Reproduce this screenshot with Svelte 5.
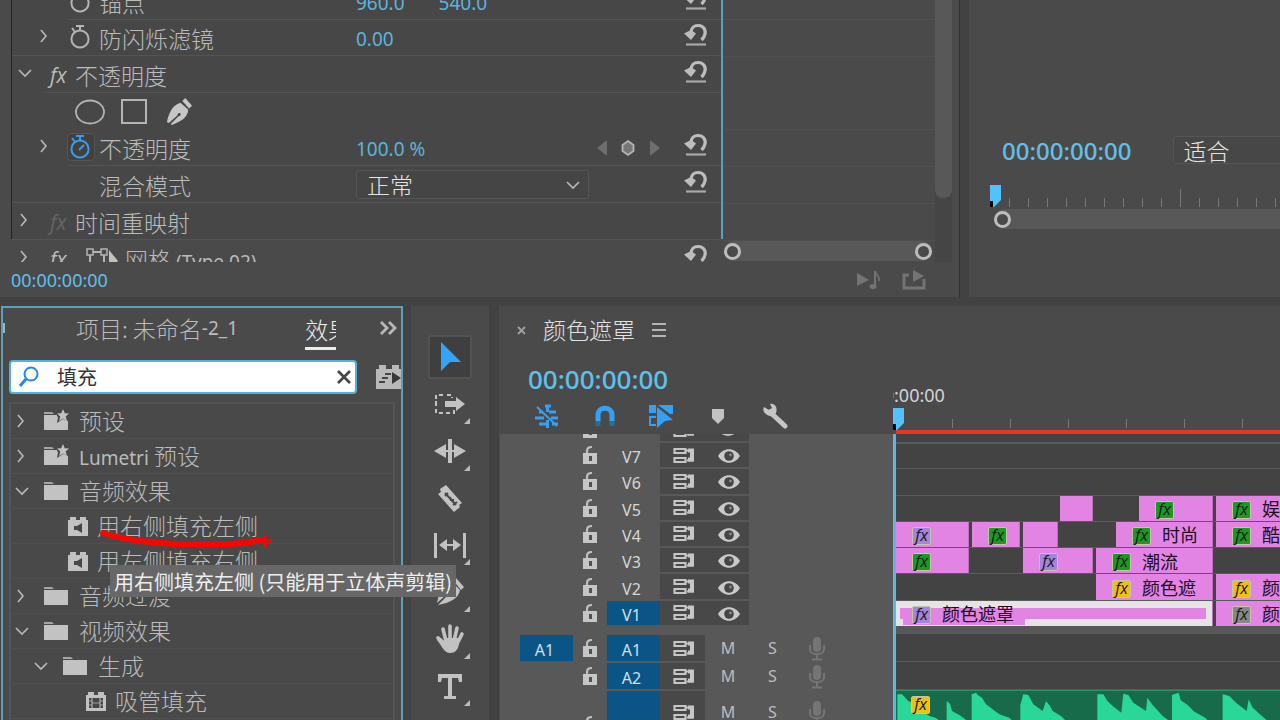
<script>
  let query = $state('填充');
  let tool = $state('select');

  const tree = [
    { label: '预设', icon: 'preset', depth: 0, open: false },
    { latin: 'Lumetri', label: ' 预设', icon: 'preset', depth: 0, open: false },
    { label: '音频效果', icon: 'folder', depth: 0, open: true },
    { label: '用右侧填充左侧', icon: 'audio', depth: 1 },
    { label: '用左侧填充右侧', icon: 'audio', depth: 1 },
    { label: '音频过渡', icon: 'folder', depth: 0, open: false },
    { label: '视频效果', icon: 'folder', depth: 0, open: true },
    { label: '生成', icon: 'folder', depth: 1, open: true },
    { label: '吸管填充', icon: 'video', depth: 2 }
  ];

  const tools = ['select', 'track', 'ripple', 'razor', 'slip', 'pen', 'hand', 'type'];

  const lanes = [
    { name: 'V7', clips: [] },
    { name: 'V6', clips: [] },
    { name: 'V5', clips: [
      { x: 164, w: 33 },
      { x: 243, w: 74, fx: 'green' },
      { x: 320, w: 200, fx: 'green', label: '娱' }
    ] },
    { name: 'V4', clips: [
      { x: 0, w: 73, fx: 'violet' },
      { x: 76, w: 48, fx: 'green' },
      { x: 127, w: 35 },
      { x: 220, w: 97, fx: 'green', label: '时尚' },
      { x: 320, w: 200, fx: 'green', label: '酷' }
    ] },
    { name: 'V3', clips: [
      { x: 0, w: 73, fx: 'green' },
      { x: 127, w: 70, fx: 'violet' },
      { x: 200, w: 117, fx: 'green', label: '潮流' }
    ] },
    { name: 'V2', clips: [
      { x: 200, w: 117, fx: 'yellow', label: '颜色遮' },
      { x: 320, w: 200, fx: 'yellow', label: '颜' }
    ] },
    { name: 'V1', on: true, clips: [
      { x: 0, w: 317, fx: 'violet', label: '颜色遮罩', selected: true },
      { x: 320, w: 200, fx: 'gray', label: '颜' }
    ] }
  ];
  const audio = [{ name: 'A1', source: true }, { name: 'A2' }, { name: '' }];
  const ticks = Array.from({ length: 60 }, (_, i) => i);
</script>

{#snippet chevron(open)}
  <svg class="chev" width="16" height="16" viewBox="0 0 16 16" fill="none" stroke="#b9b9b9" stroke-width="1.6">
    {#if open}<path d="M2 5l6 6 6-6" />{:else}<path d="M4 2l5 6-5 6" />{/if}
  </svg>
{/snippet}

{#snippet stopwatch(on)}
  <svg width="22" height="26" viewBox="0 0 22 26" fill="none" stroke={on ? '#3f9bea' : '#b4b4b4'} stroke-width="2">
    <circle cx="10" cy="15" r="8.6" />
    <path d="M6 2h8M10 2v4M2 4l3 4" />
    {#if on}<path d="M9 16l5-5" />{/if}
  </svg>
{/snippet}

{#snippet reset()}
  <button class="reset" aria-label="重置">
    <svg width="24" height="24" viewBox="0 0 24 24">
      <path d="M7 10C7 5 10 2.500 14 2.500c6 0 8.500 5 6.500 10-.6 2-1.500 3-3 4.500" fill="none" stroke="#bdbdbd" stroke-width="3.200" />
      <path d="M0 10.500L7 7l5 3.500-5 6.500z" fill="#bdbdbd" />
      <path d="M2 21.500h20" stroke="#a8a8a8" stroke-width="2.200" />
    </svg>
  </button>
{/snippet}

{#snippet pen(size)}
  <svg width={size} height={size} viewBox="0 0 28 28">
    <path d="M18 3l3-3 7 8-3 3z" fill="#c6c6c6" />
    <path d="M16 5l8 7c0 8-7 12-17 16l-1-1 8-8c2 0 3-2 2-3-2-1-3 0-3 2l-9 8-2-1C4 16 7 8 16 5z" fill="#c6c6c6" />
  </svg>
{/snippet}

{#snippet treeIcon(kind)}
  <svg width="26" height="24" viewBox="0 0 26 24">
    {#if kind === 'audio'}
      <path d="M3 6h2V3h6v3h4V3h6v3h2v16H3z" fill="#c2c2c2" />
      <path d="M9 12h3l5-3v10l-5-3H9z" fill="#474747" />
    {:else if kind === 'video'}
      <path d="M3 6h2V3h6v3h4V3h6v3h2v16H3z" fill="#c2c2c2" />
      <path d="M6 9h14v10H6z" fill="#474747" />
      <path d="M9 9v10M17 9v10" stroke="#c2c2c2" />
      <path d="M6 12h3M6 16h3M17 12h3M17 16h3M9 14h8" stroke="#a5a5a5" />
    {:else}
      <path d="M1 3h8l2 2H1z" fill="#a5a5a5" />
      <path d="M1 6h24v15H1z" fill="#c2c2c2" />
      {#if kind === 'preset'}
        <path d="M14 0h12v8l-1 4-5-2-6 4 1-6-1-1z" fill="#474747" />
        <path d="M20 0l1.800 4.300 4.200.2-3.300 2.900L24 12l-4-2.600L16 12l1.300-4.600L14 4.500l4.200-.2z" fill="#c2c2c2" />
      {/if}
    {/if}
  </svg>
{/snippet}

{#snippet lock()}
  <svg width="14" height="18" viewBox="0 0 14 18">
    <path d="M4 9V5c0-3 2-4 5-4" fill="none" stroke="#bdbdbd" stroke-width="2.200" />
    <path d="M0 7h14v11H0z" fill="#c6c6c6" />
    <path d="M6 10h3v5H6z" fill="#505050" />
  </svg>
{/snippet}

{#snippet sync()}
  <svg width="22" height="17" viewBox="0 0 22 17" fill="none" stroke="#c6c6c6" stroke-width="2.200">
    <path d="M1.500 2h11v4h-11zM1.500 11h11v4h-11z" />
    <path d="M13 3.500h6.500v10H14" />
    <path d="M15 1.500h6v13h-6v-4h2v-5h-2z" fill="#c6c6c6" stroke="none" />
  </svg>
{/snippet}

{#snippet eye()}
  <svg width="22" height="16" viewBox="0 0 22 16">
    <path d="M0 8C5-1 17-1 22 8 17 17 5 17 0 8z" fill="#c9c9c9" />
    <circle cx="11" cy="8" r="4.800" fill="#454545" />
    <circle cx="12.500" cy="7" r="1.400" fill="#8c8c8c" />
  </svg>
{/snippet}

{#snippet mic()}
  <svg width="16" height="25" viewBox="0 0 16 25" fill="none" stroke="#757575" stroke-width="2">
    <rect x="4" y="1" width="8" height="15" rx="4" fill="#757575" stroke="none" />
    <path d="M1 9v4c0 7 14 7 14 0V9M8 18v5M3 23.500h10" />
  </svg>
{/snippet}

{#snippet playhead()}
  <svg class="head" width="11" height="22" viewBox="0 0 11 22">
    <path d="M0 0h11v15l-7 7H0z" fill="#53c1fb" />
    <path d="M0 16h3v6H0z" fill="#060606" />
  </svg>
{/snippet}

<main>
  <div class="top">
    <section class="panel controls">
      <div class="controls-body">
        <div class="props">
          <div class="row ind">
            <span class="name sub"><i class="tw"></i><i class="watch">{@render stopwatch(false)}</i>锚点</span>
            <span class="vals"><button class="num">960.0</button><button class="num">540.0</button></span>
            {@render reset()}
          </div>
          <div class="row short">
            <span class="name sub"><i class="tw">{@render chevron(false)}</i><i class="watch">{@render stopwatch(false)}</i>防闪烁滤镜</span>
            <span class="vals"><button class="num">0.00</button></span>
            {@render reset()}
          </div>
          <div class="row mid">
            <span class="name"><i class="tw">{@render chevron(true)}</i><em>fx</em>不透明度</span>
            <span></span>
            {@render reset()}
          </div>
          <div class="row plain">
            <div class="masks">
              <button aria-label="创建椭圆形蒙版"><svg width="30" height="26" viewBox="0 0 30 26"><ellipse cx="15" cy="13" rx="14" ry="11.500" fill="none" stroke="#b4b4b4" stroke-width="1.800" /></svg></button>
              <button aria-label="创建四点多边形蒙版"><svg width="28" height="26" viewBox="0 0 28 26"><path d="M2 1h24v23H2z" fill="none" stroke="#b4b4b4" stroke-width="2" /></svg></button>
              <button aria-label="自由绘制贝塞尔曲线">{@render pen(27)}</button>
            </div>
          </div>
          <div class="row short ind">
            <span class="name sub"><i class="tw">{@render chevron(false)}</i><i class="watch active">{@render stopwatch(true)}</i>不透明度</span>
            <span class="vals"><button class="num">100.0 %</button>
              <span class="keys">
                <svg width="64" height="18" viewBox="0 0 64 18"><path d="M10 1v16L0 9zM53 1v16l10-8z" fill="#6e6e6e" /><path d="M31 2l5.500 4v6L31 16l-5.500-4V6z" fill="#777" stroke="#b4b4b4" stroke-width="1.800" /></svg>
              </span>
            </span>
            {@render reset()}
          </div>
          <div class="row">
            <span class="name sub"><i class="tw"></i><i class="watch"></i><label for="blend">混合模式</label></span>
            <span class="pick"><select id="blend"><option>正常</option></select>{@render chevron(true)}</span>
            {@render reset()}
          </div>
          <div class="row">
            <span class="name"><i class="tw">{@render chevron(false)}</i><em class="dim">fx</em>时间重映射</span>
          </div>
          <div class="row">
            <span class="name"><i class="tw">{@render chevron(false)}</i><em>fx</em>
              <svg class="motion" width="34" height="22" viewBox="0 0 34 22"><path d="M5 4h14M5 4v14M19 4v14" stroke="#b4b4b4" stroke-width="2" /><path d="M2 1h6v6H2zM16 1h6v6h-6z" fill="#474747" stroke="#b4b4b4" stroke-width="1.500" /><path d="M24 2v20l9-9z" fill="#c2c2c2" /></svg>
              <span>网格 <span class="latin">(Type 02)</span></span></span>
            <span></span>
            {@render reset()}
          </div>
        </div>
        <div class="keylane">
          <div class="keyrows"><b></b><b></b><b class="tall"></b><b></b><b></b><b></b></div>
          <div class="zoombar"><i class="ring"></i><i class="ring"></i></div>
        </div>
        <div class="vscroll"><i></i></div>
      </div>
      <footer>
        <button class="tc small">00:00:00:00</button>
        <span class="foot-icons">
          <svg width="26" height="20" viewBox="0 0 26 20" fill="#747474"><path d="M1 3v13l12-6z" /><ellipse cx="17" cy="16.500" rx="3.500" ry="2.500" /><path d="M19 1v15" stroke="#747474" stroke-width="2" /><path d="M19 1c1 4 5 4 4 10" fill="none" stroke="#747474" stroke-width="1.600" /></svg>
          <svg width="24" height="20" viewBox="0 0 24 20" fill="#747474"><path d="M7 5H2v13h20V9" fill="none" stroke="#747474" stroke-width="3" /><path d="M11 0l11 6-11 6z" /></svg>
        </span>
      </footer>
    </section>

    <section class="panel monitor">
      <div class="mon-bar">
        <button class="tc mid-size">00:00:00:00</button>
        <select aria-label="选择缩放级别"><option>适合</option></select>
      </div>
      <div class="mon-ruler">
        {@render playhead()}
        <div class="mon-ticks">{#each ticks as t}<i class:major={t === 9}></i>{/each}</div>
      </div>
      <div class="mon-zoom"><i class="ring"></i></div>
    </section>
  </div>

  <div class="bottom">
    <section class="panel effects">
      <nav>
        <i class="nub"></i>
        <button class="tab">项目: 未命名<span class="latin">-2_1</span></button>
        <button class="tab current">效果</button>
        <button class="more" aria-label="更多"><svg width="18" height="16" viewBox="0 0 18 16" fill="none" stroke="#b9b9b9" stroke-width="2.800"><path d="M2 2l6 6-6 6M10 2l6 6-6 6" /></svg></button>
      </nav>
      <div class="find">
        <div class="box">
          <svg width="22" height="22" viewBox="0 0 22 22" fill="none" stroke="#2b86e3"><circle cx="13" cy="8" r="6.500" stroke-width="2" /><path d="M8 13l-6 7" stroke-width="3" /></svg>
          <input aria-label="搜索效果" bind:value={query} />
          <button aria-label="清除" onclick={() => (query = '')}><svg width="14" height="14" viewBox="0 0 14 14" stroke="#444" stroke-width="2.600"><path d="M1 1l12 12M13 1L1 13" /></svg></button>
        </div>
        <svg class="badge" width="26" height="26" viewBox="0 0 26 26"><path d="M0 5h3V1h7v4h6V1h7v4h3v20H0z" fill="#b9b9b9" /><path d="M9 10h6M6 14h6M3 18h6" stroke="#444" stroke-width="2" /><path d="M16 8l9 6-9 6z" fill="#383838" /></svg>
      </div>
      <ul>
        {#each tree as item}
          <li class="d{item.depth}" class:leaf={item.open === undefined}>
            {#if item.open !== undefined}<button aria-label="展开">{@render chevron(item.open)}</button>{/if}
            {@render treeIcon(item.icon)}
            <span class="text">{#if item.latin}<span class="latin">{item.latin}</span>{/if}{item.label}</span>
          </li>
        {/each}
      </ul>
      <svg class="mark" width="172" height="24" viewBox="0 0 172 24" fill="none" stroke="#fb0500"><path d="M3 4C16 8 28 11 50 13c28 3 70 3 96 1l14-3" stroke-width="6" stroke-linecap="round" /><path d="M158 12h14M165 6v13" stroke-width="3" /></svg>
      <div class="tip" role="tooltip">用右侧填充左侧 (只能用于立体声剪辑)</div>
    </section>

    <section class="panel tools">
      {#each tools as t}
        <button class:current={tool === t} aria-label={t} onclick={() => (tool = t)}>
          <svg width="34" height="34" viewBox="0 0 34 34" fill="#c2c2c2">
            {#if t === 'select'}<path d="M8 2l20 20-11 0-9 9z" fill="#36a3fb" />
            {:else if t === 'track'}<path d="M10 8H3v18h18v-3M14 8h5v3M3 14v6" fill="none" stroke="#c2c2c2" stroke-width="2" stroke-dasharray="4 3" /><path d="M12 14h11V10l9 7-9 7v-4H12z" />
            {:else if t === 'ripple'}<path d="M15 5h4v24h-4zM1 17l12-7v14zM33 17l-12-7v14z" /><path d="M10 17h14" stroke="#c2c2c2" stroke-width="2" />
            {:else if t === 'razor'}<path d="M13 4l16 18-3 2 1 2-6 5L5 13l3-2-1-3z" /><path d="M12 12l11 12" stroke="#484848" stroke-width="2" /><path d="M15 12l-3 3M24 21l-4 3M17 16l1 3 3 0" stroke="#484848" stroke-width="2" fill="none" />
            {:else if t === 'slip'}<path d="M1 5h3v25H1zM30 5h3v25h-3zM6 17l8-6v12zM28 17l-8-6v12z" /><path d="M11 17h12" stroke="#c2c2c2" stroke-width="2" />
            {:else if t === 'pen'}<path d="M20 5l3-2 8 9-3 3zM18 6l9 9c-1 8-10 13-22 15l9-9 4 0 1-4-4-1-2 4-9 8C6 19 8 10 18 6z" />
            {:else if t === 'hand'}<path d="M11 21L5 16M13 19L10 7M17 18V4M21 19l3-13M24 22l5-10" fill="none" stroke="#c2c2c2" stroke-width="3.600" stroke-linecap="round" /><path d="M11 16h14l1 6c-1 6-4 9-9 9-6 0-8-7-13-13l3-1 5 4z" />
            {:else}<path d="M5 5h24v8h-3l-1-4h-6v18h4v3H11v-3h4V9H9l-1 4H5z" />{/if}
          </svg>
          {#if t !== 'select' && t !== 'razor'}<i></i>{/if}
        </button>
      {/each}
    </section>

    <section class="panel timeline">
      <header>
        <button aria-label="关闭"><svg width="9" height="9" viewBox="0 0 9 9" stroke="#a0a0a0" stroke-width="1.800"><path d="M1 1l7 7M8 1L1 8" /></svg></button>
        <h2>颜色遮罩</h2>
        <button aria-label="菜单"><svg width="14" height="14" viewBox="0 0 14 14" stroke="#b4b4b4" stroke-width="1.800"><path d="M0 1h14M0 7h14M0 13h14" /></svg></button>
      </header>
      <div class="tl-head">
        <button class="tc large">00:00:00:00</button>
        <div class="toggles">
          <button aria-label="嵌套"><svg width="26" height="26" viewBox="0 0 26 26" fill="none" stroke="#36a0f4" stroke-width="3"><path d="M11 3h6M13.500 2v7M13.500 17v8M15 9h7M5 9h4M1 15h9M17 15h7M18 21h6M5 21h7" /><path d="M3 4l20 19" stroke-width="2" /></svg></button>
          <button aria-label="对齐"><svg width="22" height="22" viewBox="0 0 22 22" fill="none" stroke-width="5"><path d="M4 16v-6c0-9 14-9 14 0v6" stroke="#36a0f4" /><path d="M4 16v5M18 16v5" stroke="#246f9f" /></svg></button>
          <button aria-label="链接选择项"><svg width="26" height="24" viewBox="0 0 26 24" fill="#36a0f4"><path d="M1 1h7v8H1zM10 1h15v9h-3L10 1zM9 3l16 13-8 1-8 7z" /><path d="M8 13H2v8h6" fill="none" stroke="#36a0f4" stroke-width="2" /></svg></button>
          <button aria-label="添加标记"><svg width="14" height="16" viewBox="0 0 14 16"><path d="M1 1h12v9l-6 6-6-6z" fill="#c2c2c2" /></svg></button>
          <button aria-label="时间轴显示设置"><svg width="26" height="26" viewBox="0 0 26 26"><path d="M8 9l15 14" stroke="#c6c6c6" stroke-width="5" stroke-linecap="round" /><path d="M2 4l5 3 3-2-2-4c5-1 8 4 6 9-2 4-7 4-10 1C1 9 1 6 2 4z" fill="#c6c6c6" /></svg></button>
        </div>
      </div>
      <div class="ruler">
        <div class="stamp"><span>00:00:00:00</span></div>
        <div class="ticks">{@render playhead()}{#each ticks.slice(0, 30) as t}<i></i>{/each}</div>
        <div class="render"></div>
      </div>

      <div class="heads">
        <div class="cut"><div class="th"><span></span><span>{@render lock()}</span><span></span><span class="dark">{@render sync()}</span><span class="dark">{@render eye()}</span></div></div>
        <div class="video">
          {#each lanes as l}
            <div class="th">
              <span></span>
              <span>{@render lock()}</span>
              <button class="target" class:on={l.on}>{l.name}</button>
              <span class="dark">{@render sync()}</span>
              <span class="dark eye">{@render eye()}</span>
            </div>
          {/each}
        </div>
        <div class="split"></div>
        {#each audio as a, i}
          <div class="th aud" class:last={i === 2}>
            {#if a.source}<button class="target on">A1</button>{:else}<span></span>{/if}
            <span class="lk">{@render lock()}</span>
            <button class="target on" aria-label={a.name || 'A3'}>{a.name}</button>
            <span class="dark">{@render sync()}</span>
            <button class="ms">M</button>
            <button class="ms">S</button>
            <span class="mc">{@render mic()}</span>
          </div>
        {/each}
      </div>

      <div class="lanes">
        <div class="cut"></div>
        <div class="video">
          {#each lanes as l}
            <div class="lane">
              {#each l.clips as c}
                <div class="clip" class:selected={c.selected} style="left:{c.x}px;width:{c.w}px">
                  {#if c.fx}<span class="tag"><em class="fx {c.fx}">fx</em>{#if c.label}<span>{c.label}</span>{/if}</span>{/if}
                </div>
              {/each}
            </div>
          {/each}
        </div>
        <div class="split"></div>
        <div class="alane"></div>
        <div class="alane"></div>
        <div class="alane wave">
          <svg width="384" height="30" viewBox="0 0 1152 90" fill="#29d898">
            <path d="M4 90V10H18L37 30 50 36 62 50 80 62 100 75 118 80 132 90zM152 90V30L162 38 168 60 190 72 215 90zM227 90V10L240 5 245 12 258 20 270 40 290 55 310 70 340 80 350 90zM373 90V42L382 10 397 12 412 40 440 60 450 30 462 45 470 60 495 75 510 90zM604 90V10H622L634 30 650 45 676 65 682 8 697 12 712 35 750 60 754 20 770 42 800 75 820 90zM828 90V12L848 5 854 28 875 42 895 62 930 82 935 90zM980 90V10L1000 15 1020 35 1052 60 1058 25 1070 50 1090 68 1115 90z" />
          </svg>
          <em class="fx yellow">fx</em>
        </div>
      </div>
    </section>
  </div>
</main>

<style>
  :global(body) { margin: 0; background: #424242; }
  * { box-sizing: border-box; }
  main {
    height: 100vh; display: flex; flex-direction: column; gap: 9px; overflow: hidden;
    background: #424242; color: #bbb;
    font: 300 23px/36px "Noto Sans CJK SC", sans-serif;
  }
  button, select, input { font: inherit; color: inherit; background: none; border: 0; padding: 0; margin: 0; outline: 0; }
  button { display: flex; align-items: center; justify-content: center; white-space: nowrap; }
  svg { display: block; flex: none; }
  i { font-style: normal; }
  .latin { font: 400 19px/24px "Noto Sans", sans-serif; }
  .panel { background: #4a4a4a; min-width: 0; position: relative; }
  .top { display: flex; gap: 9px; flex: none; }
  .bottom { display: flex; gap: 8px; flex: 1; min-height: 0; }

  .controls { flex: 0 0 75%; border-right: 1px solid #2f2f2f; padding-left: 11px; }
  .controls-body { height: 262px; overflow: hidden; display: flex; }
  .props { flex: 1; margin-top: -17px; background: #474747; border-left: 1px solid #242424; border-right: 2px solid #5a9fc0; height: 256px; }
  .row { display: flex; align-items: center; height: 37px; padding-right: 13px; background: linear-gradient(#545454, #545454) no-repeat 0 100% / 100% 1px; }
  .row.short { height: 36px; }
  .row.ind { background-position: 56px 100%; }
  .row.mid { background-position: 33px 100%; }
  .row.plain { background: none; }
  .row > :nth-child(2) { flex: 1; }
  .name { flex: 0 0 344px; display: flex; align-items: center; white-space: nowrap; }
  .tw { width: 26px; flex: none; display: flex; justify-content: center; }
  .sub .tw { width: 56px; padding-left: 10px; }
  .name .tw { margin-top: -4px; }
  .watch { width: 26px; margin: -2px 5px 0 0; display: flex; justify-content: center; }
  .watch.active { outline: 1px solid #555; background: #414141; border-radius: 3px; }
  em { font: italic 400 21px/24px "Open Sans", sans-serif; width: 26px; margin-left: 12px; margin-right: -1px; flex: none; }
  em.dim { color: #646464; }
  .motion { margin: 0 6px 0 10px; }
  .vals { display: flex; gap: 34px; }
  .num { color: #5cb4dc; font: 400 19px/36px "Noto Sans", sans-serif; padding-top: 2px; }
  .keys { margin-left: auto; padding-right: 23px; display: flex; align-items: center; }
  .reset { margin: -6px 0 0; }
  .masks { display: flex; align-items: center; gap: 15px; padding-left: 63px; }
  .masks button:last-child { margin-left: 2px; }
  .pick { display: flex; }
  .pick select { width: 233px; height: 29px; appearance: none; border: 1px solid #555; border-radius: 3px; background: #454545; color: #e4e4e4; padding-left: 10px; line-height: 27px; }
  .pick .chev { margin: 7px 0 0 -24px; }
  .keylane { width: 212px; display: flex; flex-direction: column; }
  .keyrows { flex: 1; overflow: hidden; }
  .keyrows b { display: block; height: 37px; border-bottom: 1px solid #505050; }
  .keyrows b:first-child { height: 20px; }
  .keyrows b.tall { height: 73px; }
  .zoombar { height: 20px; margin: 0 3px 1px 1px; background: #585858; border-radius: 10px; display: flex; justify-content: space-between; align-items: center; }
  .ring { width: 17px; height: 17px; border: 3px solid #bdbdbd; border-radius: 50%; background: #4a4a4a; flex: none; }
  .vscroll { width: 17px; margin-right: 7px; background: #454545; }
  .vscroll i { display: block; height: 198px; border-radius: 0 0 8px 8px; background: #585858; }
  footer { display: flex; justify-content: space-between; align-items: center; height: 35px; padding-right: 33px; }
  .foot-icons { display: flex; gap: 20px; }
  .tc { color: #5fc0ea; font-family: "Noto Sans", sans-serif; font-weight: 500; }
  .tc.small { font-size: 18px; font-weight: 400; }
  .tc.mid-size { font-size: 24px; }
  .tc.large { font-size: 26px; }

  .monitor { flex: 1; padding: 133px 0 0 21px; overflow: hidden; }
  .mon-bar { display: flex; gap: 42px; align-items: center; padding-left: 12px; }
  .mon-bar select { appearance: none; flex: 1; min-width: 120px; height: 28px; line-height: 26px; border: 1px solid #555; border-radius: 3px; background: #474747; color: #e4e4e4; padding-left: 9px; margin-bottom: 2px; }
  .mon-ruler { display: flex; height: 40px; align-items: flex-end; padding-bottom: 2px; }
  .mon-ticks { display: flex; gap: 18px; padding-left: 8px; align-items: flex-end; }
  .mon-ticks i { width: 1px; height: 9px; background: #777; flex: none; }
  .mon-ticks .major { height: 18px; }
  .mon-zoom { display: flex; align-items: center; height: 20px; margin-left: 4px; background: #585858; border-radius: 10px 0 0 10px; }

  .effects { flex: 0 0 402px; margin-left: 1px; border: 2px solid #5f9fba; border-bottom: 0; padding: 0 0 0 6px; display: flex; flex-direction: column; }
  nav { display: flex; align-items: center; height: 52px; margin-left: -6px; flex: none; padding-bottom: 12px; }
  .nub { width: 2px; height: 10px; background: #9bb6c2; }
  .tab { margin-left: 71px; height: 40px; }
  .tab.current { width: 31px; overflow: hidden; justify-content: flex-start; border-bottom: 3px solid #ededed; color: #ededed; margin: 4px 0 0 67px; }
  .more { margin-left: 43px; }
  .find { display: flex; align-items: center; gap: 19px; height: 34px; overflow: hidden; flex: none; }
  .box { flex: 0 0 348px; height: 34px; background: #fff; border: 2px solid #56b1dc; border-radius: 4px; display: flex; align-items: center; padding: 0 4px 0 7px; }
  .box input { flex: 1; min-width: 0; color: #333; font-size: 20px; font-weight: 400; padding-left: 17px; height: 30px; }
  ul { list-style: none; margin: 8px 6px 0 0; padding: 0; border: 2px solid #535353; border-bottom: 0; flex: 1; min-height: 0; overflow: hidden; background: #494949; }
  li { display: flex; align-items: center; height: 35px; border-bottom: 1px solid #505050; padding-left: 3px; white-space: nowrap; }
  li > button { width: 16px; margin-right: 13px; }
  .text { margin: -2px 0 0 10px; }
  .d1 { padding-left: 22px; }
  .d1.leaf { padding-left: 54px; }
  .d2.leaf { padding-left: 72px; }
  .leaf .text { margin-left: 6px; }
  .mark { position: absolute; left: 97px; top: 221px; overflow: visible; }
  .tip { position: absolute; z-index: 3; left: 107px; top: 257px; height: 32px; padding: 0 4px; background: #676767; color: #eee; font: 20px/33px "Noto Sans CJK SC", sans-serif; white-space: nowrap; }

  .tools { flex: 0 0 78px; margin-right: 2px; display: flex; flex-direction: column; align-items: center; padding-top: 29px; gap: 3px; overflow: hidden; }
  .tools button { width: 44px; height: 44px; position: relative; flex: none; }
  .tools .current { background: #3f3f3f; outline: 2px solid #525252; outline-offset: -2px; border-radius: 2px; }
  .tools i { position: absolute; right: 2px; bottom: 2px; border: 3px solid; border-color: transparent #bbb #bbb transparent; }

  .timeline { flex: 1; display: grid; grid-template: 50px 78px minmax(0, 1fr) / 394px 1fr; overflow: hidden; }
  header { grid-column: 1 / 3; display: flex; align-items: center; gap: 17px; padding: 0 0 2px 18px; }
  h2 { margin: -3px 0 0; font: inherit; color: #e2e2e2; }
  .tl-head { padding: 5px 0 0 29px; display: flex; flex-direction: column; align-items: flex-start; gap: 6px; }
  .toggles { display: flex; padding-left: 6px; }
  .toggles button { width: 57px; height: 26px; justify-content: flex-start; }
  .toggles button:nth-child(2) { padding-left: 3px; }
  .toggles button:nth-child(4) { padding-left: 6px; }
  .ruler { overflow: hidden; display: flex; flex-direction: column; }
  .stamp { height: 52px; display: flex; align-items: flex-end; overflow: hidden; color: #d4d4d4; font: 18px/26px "Noto Sans", sans-serif; }
  .stamp span { margin-left: -45px; }
  .ticks { flex: 1; display: flex; gap: 57px; align-items: flex-end; }
  .ticks .head { margin-right: -10px; }
  .ticks i { width: 1px; height: 9px; background: #777; flex: none; margin-bottom: 2px; }
  .ticks .head + i { margin-left: 1px; }
  .render { height: 4px; background: #e8352a; margin-left: 3px; }

  .heads { background: #585858; border-left: 1px solid #4a4a4a; overflow: hidden; }
  .cut { height: 8px; overflow: hidden; display: flex; align-items: flex-end; }
  .video { height: 184px; display: grid; grid-template-rows: repeat(7, minmax(0, 1fr)); }
  .th { display: grid; grid-template: minmax(0, 1fr) / 53px 34px 53px 45px 44px 45px 45px; padding-left: 20px; height: 100%; }
  .cut .th { height: 26px; flex: none; }
  .th > span { display: flex; align-items: center; justify-content: center; }
  .dark { background: #484848; border: solid #585858; border-width: 1px 0; padding-left: 2px; }
  .dark.eye { padding: 2px 0 0 3px; }
  .target { color: #d6d6d6; font: 16px/20px "Noto Sans", sans-serif; padding: 4px 4px 0 0; }
  .target.on { background: #0a5586; border: solid #585858; border-width: 1px 0; color: #cfe0ec; }
  .split { height: 8px; background: #585858; }
  .th.aud { height: 28px; }
  .th.aud.last { height: 44px; }
  .ms { font: 16px/20px "Noto Sans", sans-serif; color: #bdbdbd; padding-left: 2px; }
  .last .lk { align-items: flex-end; }

  .lanes { border-left: 3px solid #58b9ea; overflow: hidden; background: #434343; display: flex; flex-direction: column; }
  .lanes > * { flex: none; }
  .lane { position: relative; border-top: 1px solid #5a5a5a; }
  .lane:first-child { border-top-width: 2px; }
  .clip { position: absolute; top: 0; bottom: 0; background: #e284e4; overflow: hidden; display: flex; align-items: center; border-right: 1px solid #bb6fbd; }
  .tag { display: flex; align-items: center; gap: 11px; padding-left: 16px; }
  .tag > span { font: 400 18px/24px "Noto Sans CJK SC", sans-serif; color: #1c0a1c; white-space: nowrap; }
  .selected { background: linear-gradient(#e284e4, #e284e4) no-repeat 4px 7px / calc(100% - 10px) 11px #e4e4e4; }
  .selected .tag { background: linear-gradient(#e284e4, #e284e4) no-repeat 7px 7px / 100% 100%; padding-right: 11px; }
  em.fx { width: 19px; height: 18px; margin: 3px 0 0; font: italic 400 16px/14px "Open Sans", sans-serif; color: #161616; text-align: center; border: 1px solid #c5c5a8; border-radius: 2px; }
  .fx.green { background: #1a9a20; }
  .fx.violet { background: #a584dc; }
  .fx.yellow { background: #f0c010; }
  .fx.gray { background: #888; }
  .alane { height: 28px; border-bottom: 1px solid #5a5a5a; }
  .alane.wave { height: 44px; background: #176b4b; position: relative; border-top: 1px solid #2f8f68; }
  .wave em.fx { position: absolute; left: 15px; top: 2px; }
</style>
